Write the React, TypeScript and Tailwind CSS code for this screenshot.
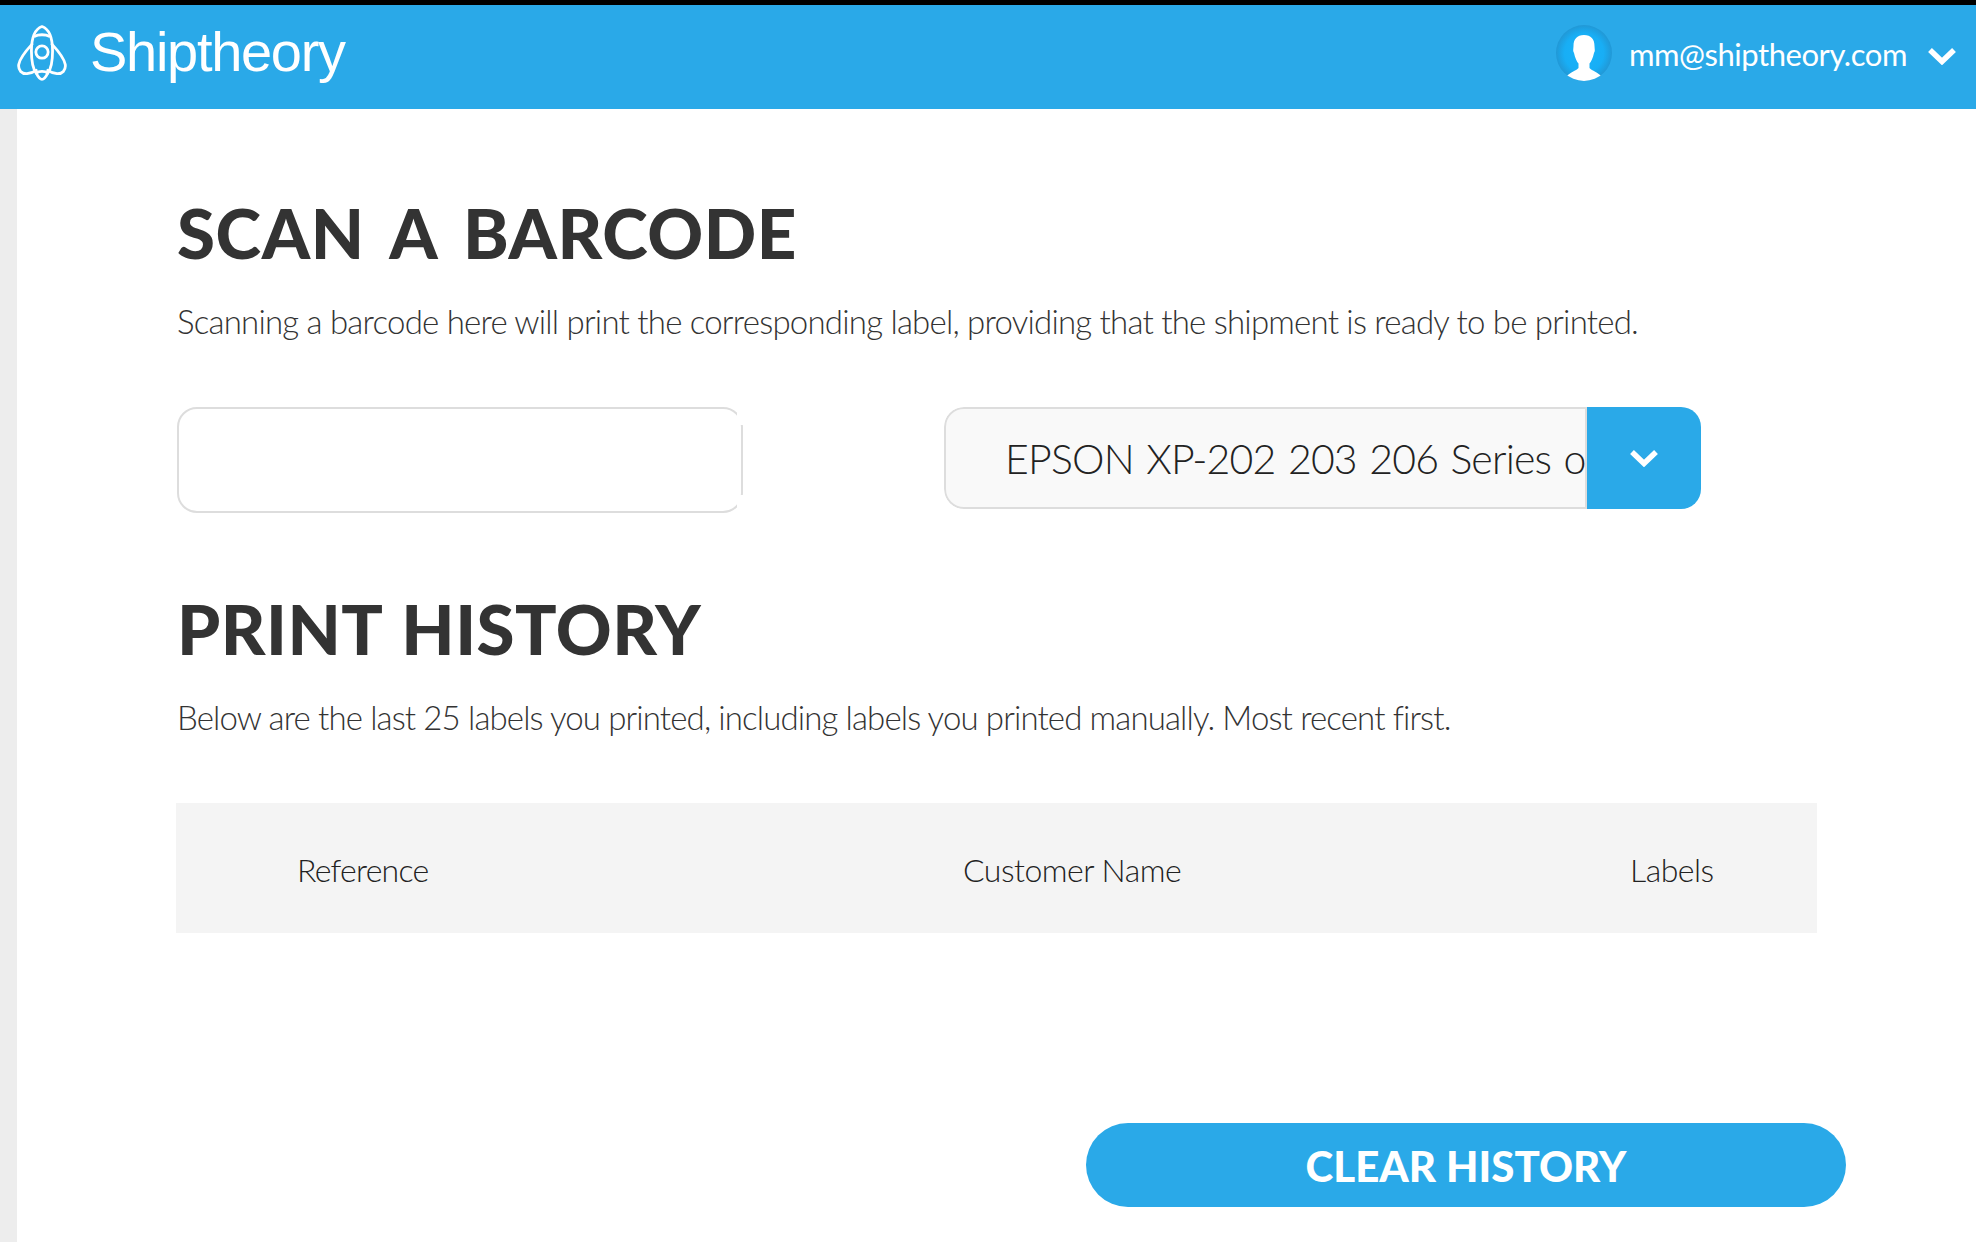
import React from "react";

function Logo() {
  return (
    <svg width="50" height="56" viewBox="0 0 52 58" fill="none" stroke="#fff" strokeWidth="2.9" strokeLinecap="round" strokeLinejoin="round">
      <path d="M26 1.5C33 4 37 13 37 27C37 38 35 46 32 50C30 54 28 56.5 26 56.5C24 56.5 22 54 20 50C17 46 15 38 15 27C15 13 19 4 26 1.5Z" />
      <path d="M18.5 11.5C22 9.500 30 9.500 33.500 11.500" />
      <path d="M20 50C23 47.500 29 47.500 32 50" />
      <circle cx="26" cy="28" r="6.4" />
      <path d="M15.500 20C9 27 3 34 1.800 41C1 47 5 51 10.500 50.500C14 50 17 49 20 47" />
      <path d="M36.500 20C43 27 49 34 50.200 41C51 47 47 51 41.500 50.500C38 50 35 49 32 47" />
    </svg>
  );
}

function Avatar() {
  return (
    <svg width="56" height="56" viewBox="0 0 56 56">
      <defs>
        <radialGradient id="avatarBg" cx="50%" cy="50%" r="50%">
          <stop offset="0%" stopColor="#18b4fb" />
          <stop offset="70%" stopColor="#18aef5" />
          <stop offset="100%" stopColor="#2198d6" />
        </radialGradient>
        <clipPath id="avatarClip">
          <circle cx="28" cy="28" r="28" />
        </clipPath>
      </defs>
      <circle cx="28" cy="28" r="28" fill="url(#avatarBg)" />
      <g clipPath="url(#avatarClip)">
        <path
          fill="#fff"
          d="M28 10C35 10 38.500 14 38.500 21C38.500 24 39.500 26 38 28C37 33 35 37 33.500 38.500V43C36 46 42 47 46 52V57H10V52C14 47 20 46 22.500 43V38.500C21 37 19 33 18 28C16.500 26 17.500 24 17.500 21C17.500 14 21 10 28 10Z"
        />
      </g>
    </svg>
  );
}

function Chevron({ className }: { className: string }) {
  return (
    <svg className={className} viewBox="0 0 28 18" fill="none" stroke="#fff" strokeWidth="5.5">
      <path d="M2 3L14 14.500L26 3" />
    </svg>
  );
}

export default function App() {
  return (
    <div className="h-[1242px] w-[1976px] overflow-hidden bg-white font-['Lato','Liberation_Sans',sans-serif] text-[#333]">
      <header className="flex h-[109px] items-center justify-between border-t-[5px] border-black bg-[#2aa9e8] pb-[8px] pl-[17px] pr-[20px] text-white">
        <div className="flex items-center gap-[23px]">
          <Logo />
          <span className="mb-[3px] font-['Liberation_Sans',sans-serif] text-[56px] leading-none tracking-[-1.3px]">Shiptheory</span>
        </div>
        <div className="flex items-center">
          <Avatar />
          <span className="ml-[17px] mt-[2px] text-[31px] leading-none tracking-[-0.45px]">mm@shiptheory.com</span>
          <Chevron className="ml-[21px] mt-[6px] h-[18px] w-[28px]" />
        </div>
      </header>
      <div className="flex h-[1133px]">
        <div className="w-[17px] shrink-0 bg-[#ededed]" />
        <main className="flex-1 pl-[160px]">
          <h1 className="mt-[80px] text-[69px] font-black leading-[88px] tracking-[0.6px] [word-spacing:10px]">SCAN A BARCODE</h1>
          <p className="mt-[22px] text-[33px] font-light leading-[44px] tracking-[-0.78px]">
            Scanning a barcode here will print the corresponding label, providing that the shipment is ready to be printed.
          </p>
          <div className="mt-[64px] flex items-start">
            <div className="relative h-[106px] w-[566px] rounded-[20px] border-2 border-[#dddddd] bg-white">
              <div className="absolute right-[-2px] top-[-2px] h-[18px] w-[6px] bg-white" />
              <div className="absolute bottom-[-2px] right-[-2px] h-[18px] w-[6px] bg-white" />
            </div>
            <div className="ml-[201px] flex h-[102px] w-[757px] overflow-hidden rounded-[20px]">
              <div className="flex min-w-0 flex-1 items-center overflow-hidden rounded-l-[20px] border-2 border-[#dddddd] bg-[#f9f9f9] pl-[59px] text-[41px] font-light leading-none whitespace-nowrap text-[#222] tracking-[-0.8px] [word-spacing:2px]">
                EPSON XP-202 203 206 Series o
              </div>
              <div className="flex w-[114px] shrink-0 items-center justify-center bg-[#2aa9e8]">
                <Chevron className="h-[18px] w-[28px]" />
              </div>
            </div>
          </div>
          <h2 className="mt-[72px] text-[69px] font-black leading-[88px] tracking-[0.5px] [word-spacing:3px]">PRINT HISTORY</h2>
          <p className="mt-[22px] text-[33px] font-light leading-[44px] tracking-[-0.87px]">
            Below are the last 25 labels you printed, including labels you printed manually. Most recent first.
          </p>
          <div className="ml-[-1px] mt-[64px] flex h-[130px] w-[1641px] items-center bg-[#f4f4f4] pt-[4px] text-[32px] font-light text-[#222] tracking-[-0.5px]">
            <span className="ml-[121px] w-[666px] tracking-[-0.75px]">Reference</span>
            <span className="w-[667px]">Customer Name</span>
            <span>Labels</span>
          </div>
          <div className="ml-[909px] mt-[190px] flex h-[84px] w-[760px] items-center justify-center rounded-full bg-[#2aa9e8] pt-[3px] text-[42px] font-black text-white">
            CLEAR HISTORY
          </div>
        </main>
      </div>
    </div>
  );
}
